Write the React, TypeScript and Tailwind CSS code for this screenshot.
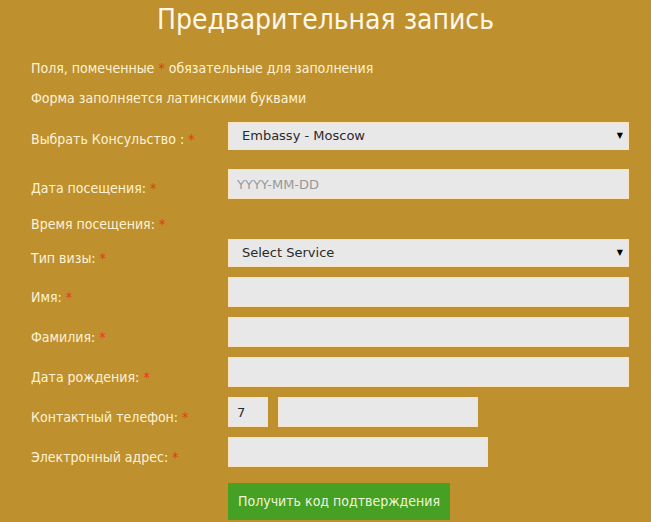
import React from 'react';

const labelFont = { fontFamily: '"DejaVu Sans Condensed", "DejaVu Sans", sans-serif' };
const inputFont = { fontFamily: '"DejaVu Sans", Verdana, sans-serif', fontWeight: 400 };

function Star() {
  return <span className="text-[#e2381c]">*</span>;
}

function Label({ text, pt }: { text: string; pt: string }) {
  return (
    <div className={`w-[197px] shrink-0 text-[14px] leading-[16px] ${pt}`}>
      {text} <Star />
    </div>
  );
}

const boxClasses =
  'h-[30px] shrink-0 border border-[#fbe2c0] bg-[#e8e8e8] text-[13px] text-[#2a2a2a] outline-none';

// custom-looking dropdown with the small black triangle on the right
function SelectBox({ value }: { value: string }) {
  return (
    <div className="relative flex h-[28px] w-[401px] shrink-0 items-center border border-[#fbe2c0] bg-[#e8e8e8] pl-[13px] text-[13px] text-[#2a2a2a]" style={inputFont} role="combobox">
      <span>{value}</span>
      <span className="pointer-events-none absolute right-[5px] top-[7px] text-[8px] text-black">▼</span>
    </div>
  );
}

export default function App() {
  return (
    <div className="min-h-[522px] w-[651px] bg-[#bf902e] text-[#fdf3d6]" style={labelFont}>
      <h1 className="h-[40px] text-center text-[28px] leading-[40px] text-[#fff8e8]">
        Предварительная запись
      </h1>
      <div className="pl-[31px] pr-[22px]">
        <p className="mt-[20px] text-[14px] leading-[16px]">
          Поля, помеченные <Star /> обязательные для заполнения
        </p>
        <p className="mt-[14px] text-[14px] leading-[16px]">Форма заполняется латинскими буквами</p>

        <div className="mt-[16px] flex">
          <Label text="Выбрать Консульство :" pt="pt-[9px]" />
          <SelectBox value="Embassy - Moscow" />
        </div>

        <div className="mt-[19px] flex">
          <Label text="Дата посещения:" pt="pt-[11px]" />
          <input className={`${boxClasses} w-[401px] pl-[8px] placeholder:text-[#999]`} style={inputFont} placeholder="YYYY-MM-DD" />
        </div>

        <div className="mt-[17px] flex h-[16px]">
          <div className="text-[14px] leading-[16px]">
            Время посещения: <Star />
          </div>
        </div>

        <div className="mt-[7px] flex">
          <Label text="Тип визы:" pt="pt-[11px]" />
          <SelectBox value="Select Service" />
        </div>

        {['Имя:', 'Фамилия:', 'Дата рождения:'].map((l) => (
          <div key={l} className="mt-[10px] flex">
            <Label text={l} pt="pt-[12px]" />
            <input className={`${boxClasses} w-[401px]`} style={inputFont} />
          </div>
        ))}

        <div className="mt-[10px] flex">
          <Label text="Контактный телефон:" pt="pt-[12px]" />
          <input className={`${boxClasses} w-[40px] pl-[8px]`} style={inputFont} defaultValue="7" />
          <input className={`${boxClasses} ml-[10px] w-[200px]`} style={inputFont} />
        </div>

        <div className="mt-[10px] flex">
          <Label text="Электронный адрес:" pt="pt-[12px]" />
          <input className={`${boxClasses} w-[260px]`} style={inputFont} />
        </div>

        <div className="mt-[16px] flex">
          <div className="w-[197px] shrink-0" />
          <button
            type="button"
            className="h-[37px] w-[222px] shrink-0 bg-[#45a024] text-[14px] text-[#eef6dc]"
            style={labelFont}
          >
            Получить код подтверждения
          </button>
        </div>
      </div>
    </div>
  );
}
